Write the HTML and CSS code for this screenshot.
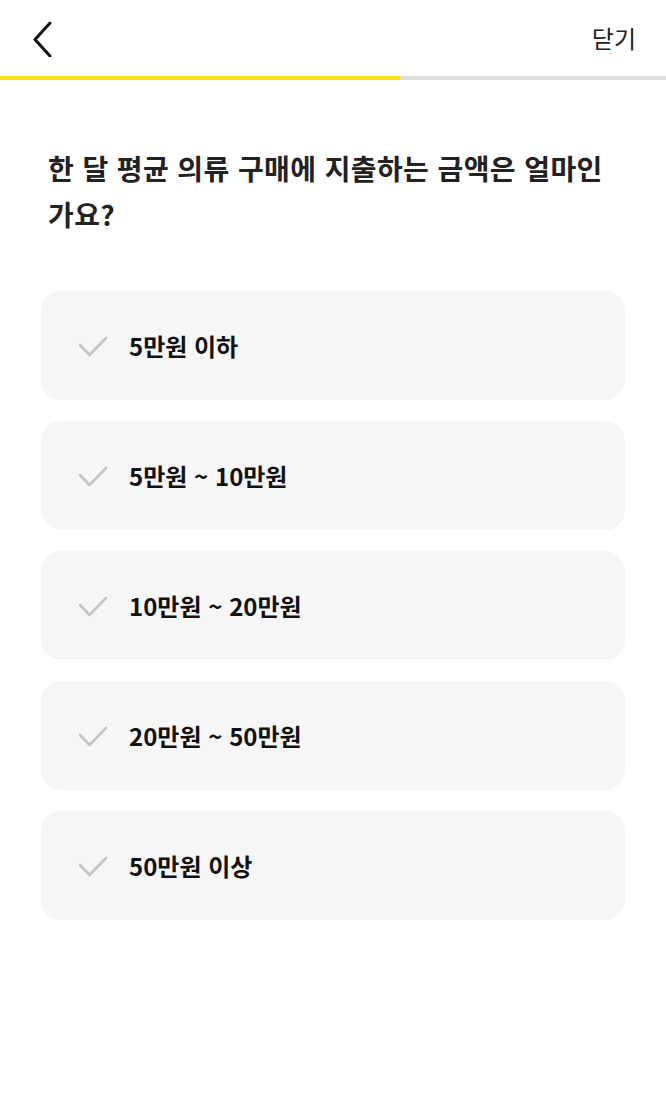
FILE: index.html
```html
<!DOCTYPE html>
<html lang="ko">
<head>
  <meta charset="utf-8">
  <title>설문</title>
  <link rel="stylesheet" href="styles.css">
</head>
<body>
  <div class="header">
    <button class="back-button">
      <svg xmlns="http://www.w3.org/2000/svg" width="22" height="36" viewBox="0 0 22 36" fill="none">
        <path d="M18 2L3 18.5L18 35" stroke="#111111" stroke-width="3" stroke-linecap="round" stroke-linejoin="round"/>
      </svg>
    </button>
    <button class="close-button">닫기</button>
  </div>
  <div class="progress">
    <div class="progress-fill" style="width: 60%"></div>
  </div>
  <div class="container">
    <h1 class="question">한 달 평균 의류 구매에 지출하는 금액은 얼마인가요?</h1>
    <div class="options">
      <button class="option">
        <svg class="check" xmlns="http://www.w3.org/2000/svg" width="30" height="22" viewBox="0 0 30 22" fill="none">
          <path d="M2 9L11.5 19L28 2" stroke="#c4c4c4" stroke-width="2.6" stroke-linecap="round" stroke-linejoin="round"/>
        </svg>
        <span>5만원 이하</span>
      </button>
      <button class="option">
        <svg class="check" xmlns="http://www.w3.org/2000/svg" width="30" height="22" viewBox="0 0 30 22" fill="none">
          <path d="M2 9L11.5 19L28 2" stroke="#c4c4c4" stroke-width="2.6" stroke-linecap="round" stroke-linejoin="round"/>
        </svg>
        <span>5만원 ~ 10만원</span>
      </button>
      <button class="option">
        <svg class="check" xmlns="http://www.w3.org/2000/svg" width="30" height="22" viewBox="0 0 30 22" fill="none">
          <path d="M2 9L11.5 19L28 2" stroke="#c4c4c4" stroke-width="2.6" stroke-linecap="round" stroke-linejoin="round"/>
        </svg>
        <span>10만원 ~ 20만원</span>
      </button>
      <button class="option">
        <svg class="check" xmlns="http://www.w3.org/2000/svg" width="30" height="22" viewBox="0 0 30 22" fill="none">
          <path d="M2 9L11.5 19L28 2" stroke="#c4c4c4" stroke-width="2.6" stroke-linecap="round" stroke-linejoin="round"/>
        </svg>
        <span>20만원 ~ 50만원</span>
      </button>
      <button class="option">
        <svg class="check" xmlns="http://www.w3.org/2000/svg" width="30" height="22" viewBox="0 0 30 22" fill="none">
          <path d="M2 9L11.5 19L28 2" stroke="#c4c4c4" stroke-width="2.6" stroke-linecap="round" stroke-linejoin="round"/>
        </svg>
        <span>50만원 이상</span>
      </button>
    </div>
  </div>
</body>
</html>
```
FILE: styles.css
```css
body {
  font-family: 'Noto Sans CJK KR', 'Noto Sans', sans-serif;
  margin: 0;
  padding: 0;
  background-color: #ffffff;
  color: #222222;
  width: 666px;
  height: 1112px;
}
button {
  font-family: inherit;
  background: none;
  border: none;
  padding: 0;
  cursor: pointer;
}
.header {
  height: 76px;
  display: flex;
  align-items: center;
  justify-content: space-between;
  padding: 0 30px 0 32px;
}
.back-button {
  display: flex;
  align-items: center;
  margin-top: 1px;
}
.close-button {
  font-size: 24px;
  color: #222222;
  line-height: 1;
}
.progress {
  height: 4px;
  background-color: #e0e0e0;
}
.progress-fill {
  height: 100%;
  background-color: #ffde1c;
}
.container {
  padding: 65px 41px 0 41px;
}
.question {
  font-size: 28px;
  font-weight: 700;
  line-height: 46px;
  letter-spacing: 0.4px;
  margin: 0 18px 54px 7px;
  color: #222222;
}
.options {
  display: flex;
  flex-direction: column;
  gap: 21px;
}
.option {
  height: 109px;
  background-color: #f6f6f6;
  border-radius: 20px;
  display: flex;
  align-items: center;
  padding-left: 37px;
  text-align: left;
}
.option .check {
  margin-right: 21px;
  margin-top: 2px;
}
.option span {
  font-size: 24px;
  font-weight: 700;
  color: #111111;
}
```
